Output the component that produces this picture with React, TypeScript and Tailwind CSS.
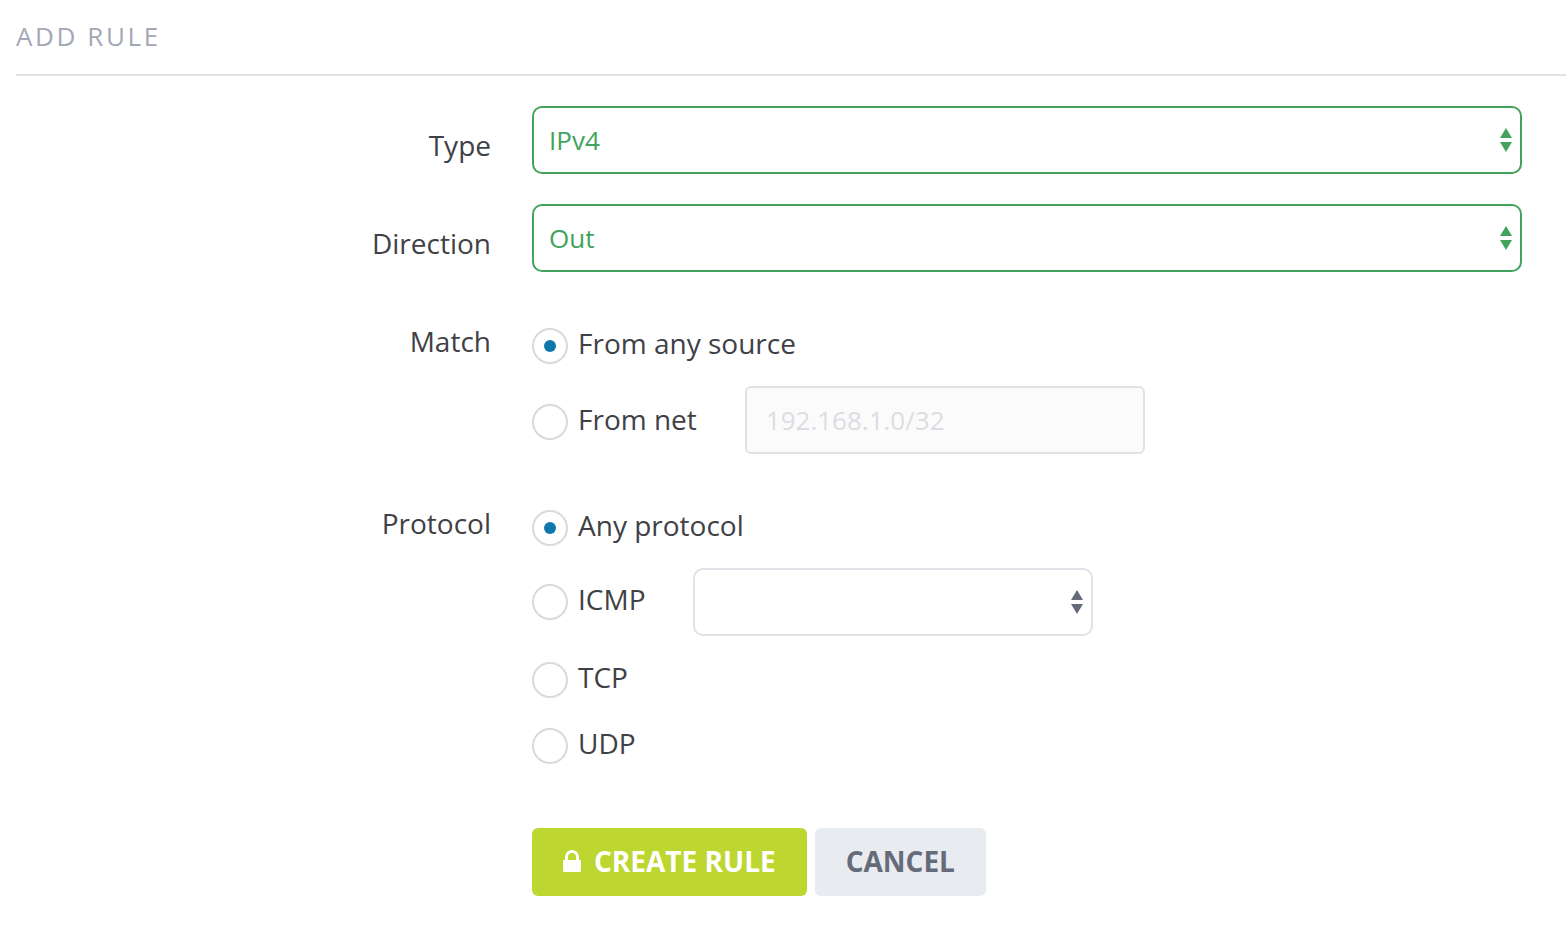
import { useState } from "react";
import type { ReactNode } from "react";

function Arrows() {
  return (
    <svg
      aria-hidden="true"
      viewBox="0 0 12 24"
      className="pointer-events-none absolute top-[22px] right-[10px] h-6 w-3 fill-current"
    >
      <path d="M6 0 12 10H0ZM0 14h12L6 24Z" />
    </svg>
  );
}

function LockIcon() {
  return (
    <svg aria-hidden="true" viewBox="0 0 18 22" className="h-[22px] w-[18px] fill-current">
      <path
        fillRule="evenodd"
        d="M2 10V7a7 7 0 0 1 14 0v3h.8c.7 0 1.2.5 1.2 1.200v9.600c0 .7-.5 1.200-1.200 1.200H1.200C.5 22 0 21.500 0 20.800v-9.600C0 10.500.5 10 1.200 10ZM5 10h8V7a4 4 0 0 0-8 0Z"
      />
    </svg>
  );
}

interface RadioProps {
  name: string;
  value: string;
  current: string;
  onSelect: (value: string) => void;
  children: ReactNode;
}

function Radio({ name, value, current, onSelect, children }: RadioProps) {
  return (
    <label className="flex h-9 shrink-0 items-start gap-[10px] leading-[30px]">
      <input
        type="radio"
        name={name}
        value={value}
        checked={current === value}
        onChange={() => onSelect(value)}
        className="grid size-9 shrink-0 appearance-none place-items-center rounded-full border-2 border-[#dadada] bg-white before:size-3 before:rounded-full checked:before:bg-[#1077ac]"
      />
      {children}
    </label>
  );
}

const rowClass = "grid grid-cols-[95fr_198fr] gap-x-[41px]";
const labelClass = "pt-5 text-right leading-[38px]";
const selectClass =
  "h-[68px] w-full appearance-none rounded-[10px] border-2 border-current bg-white px-[15px] text-[26px]";

export default function App() {
  const [source, setSource] = useState("any");
  const [protocol, setProtocol] = useState("any");

  return (
    <main className="bg-white pl-4 font-['Open_Sans',sans-serif] text-[28px] text-[#404146]">
      <h1 className="border-b-2 border-[#e1e1e8] pt-4 pb-[18px] text-[26px] leading-10 tracking-widest text-[#a3a8b5] uppercase">
        Add rule
      </h1>
      <form className="flex flex-col gap-[30px] pt-[30px] pr-11 pb-8" onSubmit={(e) => e.preventDefault()}>
        <div className={rowClass}>
          <label htmlFor="type" className={labelClass}>Type</label>
          <div className="relative text-[#41a35c]">
            <select id="type" className={selectClass}>
              <option>IPv4</option>
              <option>IPv6</option>
            </select>
            <Arrows />
          </div>
        </div>

        <div className={rowClass}>
          <label htmlFor="direction" className={labelClass}>Direction</label>
          <div className="relative text-[#41a35c]">
            <select id="direction" className={selectClass}>
              <option>Out</option>
              <option>In</option>
            </select>
            <Arrows />
          </div>
        </div>

        <div role="radiogroup" aria-labelledby="match" className={rowClass}>
          <span id="match" className={labelClass}>Match</span>
          <div className="flex flex-col gap-[22px] pt-[26px]">
            <Radio name="match" value="any" current={source} onSelect={setSource}>
              From any source
            </Radio>
            <div className="flex items-start gap-12">
              <div className="shrink-0 pt-[18px]">
                <Radio name="match" value="net" current={source} onSelect={setSource}>
                  From net
                </Radio>
              </div>
              <input
                type="text"
                aria-label="Source net"
                placeholder="192.168.1.0/32"
                disabled={source !== "net"}
                className="h-[68px] w-[400px] min-w-0 rounded-md border-2 border-[#e1e1e8] bg-white px-[19px] text-[26px] placeholder:text-[#dcdde3] disabled:bg-[#fbfbfb]"
              />
            </div>
          </div>
        </div>

        <div role="radiogroup" aria-labelledby="protocol" className={rowClass}>
          <span id="protocol" className={labelClass}>Protocol</span>
          <div className="flex flex-col pt-[26px] pb-[34px]">
            <Radio name="protocol" value="any" current={protocol} onSelect={setProtocol}>
              Any protocol
            </Radio>
            <div className="mt-[22px] mb-[26px] flex items-center gap-12">
              <Radio name="protocol" value="icmp" current={protocol} onSelect={setProtocol}>
                ICMP
              </Radio>
              <div className="relative w-[400px] min-w-0 text-[#666b7a]">
                <select
                  aria-label="ICMP type"
                  className="h-[68px] w-full appearance-none rounded-[10px] border-2 border-[#e1e1e8] bg-white px-[15px] text-[26px]"
                >
                  <option></option>
                </select>
                <Arrows />
              </div>
            </div>
            <div className="flex flex-col gap-[30px]">
              <Radio name="protocol" value="tcp" current={protocol} onSelect={setProtocol}>
                TCP
              </Radio>
              <Radio name="protocol" value="udp" current={protocol} onSelect={setProtocol}>
                UDP
              </Radio>
            </div>
          </div>
        </div>

        <div className={rowClass}>
          <div className="col-start-2 flex gap-2 font-bold">
            <button
              type="submit"
              className="flex h-[68px] items-center gap-[13px] rounded-md bg-[#bed730] px-[31px] pb-0.5 text-white uppercase"
            >
              <LockIcon />
              Create rule
            </button>
            <button type="button" className="h-[68px] rounded-md bg-[#e8ebf0] px-[31px] pb-0.5 text-[#666b7a] uppercase">
              Cancel
            </button>
          </div>
        </div>
      </form>
    </main>
  );
}
